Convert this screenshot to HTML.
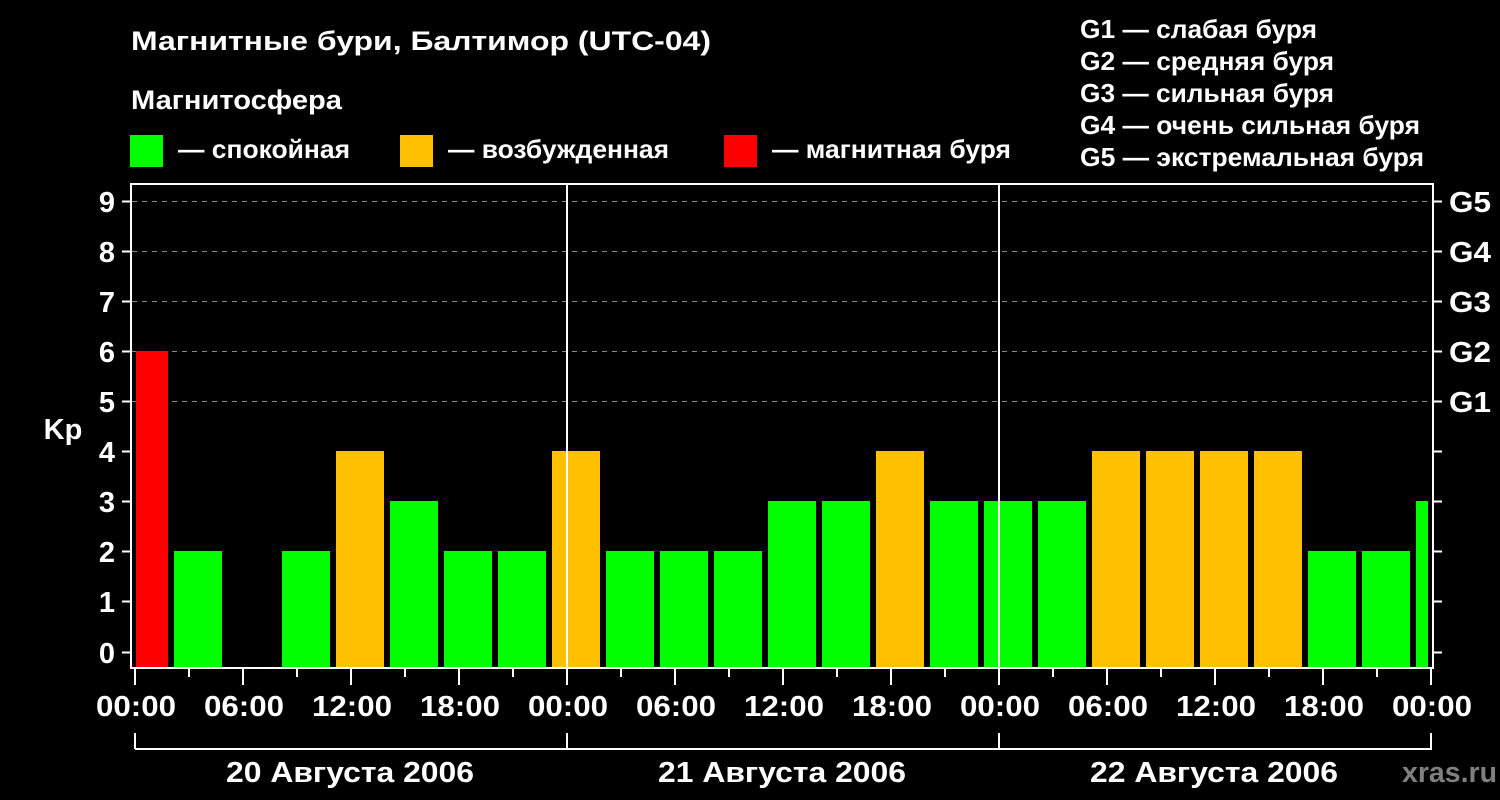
<!DOCTYPE html>
<html><head><meta charset="utf-8"><style>html,body{margin:0;padding:0;background:#000}svg{display:block}text{font-family:"Liberation Sans",Arial,sans-serif;font-weight:bold;fill:#fff}</style></head><body>
<svg width="1500" height="800" viewBox="0 0 1500 800" xmlns="http://www.w3.org/2000/svg">
<rect width="1500" height="800" fill="#000"/>
<text x="131" y="50" font-size="27" textLength="580" lengthAdjust="spacingAndGlyphs">Магнитные бури, Балтимор (UTC-04)</text>
<text x="131" y="109" font-size="27" textLength="211" lengthAdjust="spacingAndGlyphs">Магнитосфера</text>
<rect x="130" y="135" width="33" height="32" fill="#00ff00"/>
<text x="178" y="158" font-size="26" textLength="172" lengthAdjust="spacingAndGlyphs">— спокойная</text>
<rect x="400" y="135" width="33" height="32" fill="#ffc000"/>
<text x="448" y="158" font-size="26" textLength="221" lengthAdjust="spacingAndGlyphs">— возбужденная</text>
<rect x="724" y="135" width="33" height="32" fill="#ff0000"/>
<text x="772" y="158" font-size="26" textLength="239" lengthAdjust="spacingAndGlyphs">— магнитная буря</text>
<g font-size="26">
<text x="1080" y="38" textLength="237" lengthAdjust="spacingAndGlyphs">G1 — слабая буря</text>
<text x="1080" y="70" textLength="254" lengthAdjust="spacingAndGlyphs">G2 — средняя буря</text>
<text x="1080" y="102" textLength="254" lengthAdjust="spacingAndGlyphs">G3 — сильная буря</text>
<text x="1080" y="134" textLength="340" lengthAdjust="spacingAndGlyphs">G4 — очень сильная буря</text>
<text x="1080" y="166" textLength="344" lengthAdjust="spacingAndGlyphs">G5 — экстремальная буря</text>
</g>
<g stroke="#888" stroke-width="1" stroke-dasharray="5,5">
<line x1="132" y1="201.5" x2="1432" y2="201.5"/>
<line x1="132" y1="251.5" x2="1432" y2="251.5"/>
<line x1="132" y1="301.5" x2="1432" y2="301.5"/>
<line x1="132" y1="351.5" x2="1432" y2="351.5"/>
<line x1="132" y1="401.5" x2="1432" y2="401.5"/>
</g>
<g>
<rect x="136" y="351" width="32" height="317" fill="#ff0000"/>
<rect x="174" y="551" width="48" height="117" fill="#00ff00"/>
<rect x="282" y="551" width="48" height="117" fill="#00ff00"/>
<rect x="336" y="451" width="48" height="217" fill="#ffc000"/>
<rect x="390" y="501" width="48" height="167" fill="#00ff00"/>
<rect x="444" y="551" width="48" height="117" fill="#00ff00"/>
<rect x="498" y="551" width="48" height="117" fill="#00ff00"/>
<rect x="552" y="451" width="48" height="217" fill="#ffc000"/>
<rect x="606" y="551" width="48" height="117" fill="#00ff00"/>
<rect x="660" y="551" width="48" height="117" fill="#00ff00"/>
<rect x="714" y="551" width="48" height="117" fill="#00ff00"/>
<rect x="768" y="501" width="48" height="167" fill="#00ff00"/>
<rect x="822" y="501" width="48" height="167" fill="#00ff00"/>
<rect x="876" y="451" width="48" height="217" fill="#ffc000"/>
<rect x="930" y="501" width="48" height="167" fill="#00ff00"/>
<rect x="984" y="501" width="48" height="167" fill="#00ff00"/>
<rect x="1038" y="501" width="48" height="167" fill="#00ff00"/>
<rect x="1092" y="451" width="48" height="217" fill="#ffc000"/>
<rect x="1146" y="451" width="48" height="217" fill="#ffc000"/>
<rect x="1200" y="451" width="48" height="217" fill="#ffc000"/>
<rect x="1254" y="451" width="48" height="217" fill="#ffc000"/>
<rect x="1308" y="551" width="48" height="117" fill="#00ff00"/>
<rect x="1362" y="551" width="48" height="117" fill="#00ff00"/>
<rect x="1416" y="501" width="12" height="167" fill="#00ff00"/>
</g>
<g stroke="#fff" stroke-width="2">
<line x1="567" y1="183" x2="567" y2="668"/>
<line x1="999" y1="183" x2="999" y2="668"/>
</g>
<rect x="131" y="184" width="1302" height="484" fill="none" stroke="#fff" stroke-width="2"/>
<g stroke="#fff" stroke-width="2">
<line x1="122" y1="201.5" x2="131" y2="201.5"/><line x1="1433" y1="201.5" x2="1442" y2="201.5"/>
<line x1="122" y1="251.5" x2="131" y2="251.5"/><line x1="1433" y1="251.5" x2="1442" y2="251.5"/>
<line x1="122" y1="301.5" x2="131" y2="301.5"/><line x1="1433" y1="301.5" x2="1442" y2="301.5"/>
<line x1="122" y1="351.5" x2="131" y2="351.5"/><line x1="1433" y1="351.5" x2="1442" y2="351.5"/>
<line x1="122" y1="401.5" x2="131" y2="401.5"/><line x1="1433" y1="401.5" x2="1442" y2="401.5"/>
<line x1="122" y1="451.5" x2="131" y2="451.5"/><line x1="1433" y1="451.5" x2="1442" y2="451.5"/>
<line x1="122" y1="501.5" x2="131" y2="501.5"/><line x1="1433" y1="501.5" x2="1442" y2="501.5"/>
<line x1="122" y1="551.5" x2="131" y2="551.5"/><line x1="1433" y1="551.5" x2="1442" y2="551.5"/>
<line x1="122" y1="601.5" x2="131" y2="601.5"/><line x1="1433" y1="601.5" x2="1442" y2="601.5"/>
<line x1="122" y1="652.5" x2="131" y2="652.5"/><line x1="1433" y1="652.5" x2="1442" y2="652.5"/>
</g>
<g font-size="29" text-anchor="middle">
<text x="107" y="212">9</text><text x="107" y="262">8</text><text x="107" y="312">7</text>
<text x="107" y="362">6</text><text x="107" y="412">5</text><text x="107" y="462">4</text>
<text x="107" y="512">3</text><text x="107" y="562">2</text><text x="107" y="612">1</text>
<text x="107" y="663">0</text>
<text x="63" y="439">Kp</text>
</g>
<g font-size="29">
<text x="1449" y="212" textLength="42" lengthAdjust="spacingAndGlyphs">G5</text><text x="1449" y="262" textLength="42" lengthAdjust="spacingAndGlyphs">G4</text><text x="1449" y="312" textLength="42" lengthAdjust="spacingAndGlyphs">G3</text>
<text x="1449" y="362" textLength="42" lengthAdjust="spacingAndGlyphs">G2</text><text x="1449" y="412" textLength="42" lengthAdjust="spacingAndGlyphs">G1</text>
</g>
<g stroke="#fff" stroke-width="2">
<line x1="135" y1="669" x2="135" y2="685"/><line x1="189" y1="669" x2="189" y2="677"/>
<line x1="243" y1="669" x2="243" y2="685"/><line x1="297" y1="669" x2="297" y2="677"/>
<line x1="351" y1="669" x2="351" y2="685"/><line x1="405" y1="669" x2="405" y2="677"/>
<line x1="459" y1="669" x2="459" y2="685"/><line x1="513" y1="669" x2="513" y2="677"/>
<line x1="567" y1="669" x2="567" y2="685"/><line x1="621" y1="669" x2="621" y2="677"/>
<line x1="675" y1="669" x2="675" y2="685"/><line x1="729" y1="669" x2="729" y2="677"/>
<line x1="783" y1="669" x2="783" y2="685"/><line x1="837" y1="669" x2="837" y2="677"/>
<line x1="891" y1="669" x2="891" y2="685"/><line x1="945" y1="669" x2="945" y2="677"/>
<line x1="999" y1="669" x2="999" y2="685"/><line x1="1053" y1="669" x2="1053" y2="677"/>
<line x1="1107" y1="669" x2="1107" y2="685"/><line x1="1161" y1="669" x2="1161" y2="677"/>
<line x1="1215" y1="669" x2="1215" y2="685"/><line x1="1269" y1="669" x2="1269" y2="677"/>
<line x1="1323" y1="669" x2="1323" y2="685"/><line x1="1377" y1="669" x2="1377" y2="677"/>
<line x1="1431" y1="669" x2="1431" y2="685"/>
</g>
<g font-size="29" text-anchor="middle">
<text x="136" y="716" textLength="80" lengthAdjust="spacingAndGlyphs">00:00</text><text x="244" y="716" textLength="80" lengthAdjust="spacingAndGlyphs">06:00</text><text x="352" y="716" textLength="80" lengthAdjust="spacingAndGlyphs">12:00</text>
<text x="460" y="716" textLength="80" lengthAdjust="spacingAndGlyphs">18:00</text><text x="568" y="716" textLength="80" lengthAdjust="spacingAndGlyphs">00:00</text><text x="676" y="716" textLength="80" lengthAdjust="spacingAndGlyphs">06:00</text>
<text x="784" y="716" textLength="80" lengthAdjust="spacingAndGlyphs">12:00</text><text x="892" y="716" textLength="80" lengthAdjust="spacingAndGlyphs">18:00</text><text x="1000" y="716" textLength="80" lengthAdjust="spacingAndGlyphs">00:00</text>
<text x="1108" y="716" textLength="80" lengthAdjust="spacingAndGlyphs">06:00</text><text x="1216" y="716" textLength="80" lengthAdjust="spacingAndGlyphs">12:00</text><text x="1324" y="716" textLength="80" lengthAdjust="spacingAndGlyphs">18:00</text>
<text x="1432" y="716" textLength="80" lengthAdjust="spacingAndGlyphs">00:00</text>
</g>
<g stroke="#fff" stroke-width="2" fill="none">
<line x1="135" y1="749" x2="1432" y2="749"/>
<line x1="135" y1="733" x2="135" y2="749"/>
<line x1="567" y1="733" x2="567" y2="749"/>
<line x1="999" y1="733" x2="999" y2="749"/>
<line x1="1431" y1="733" x2="1431" y2="749"/>
</g>
<g font-size="29" text-anchor="middle">
<text x="350" y="782" textLength="248" lengthAdjust="spacingAndGlyphs">20 Августа 2006</text>
<text x="782" y="782" textLength="248" lengthAdjust="spacingAndGlyphs">21 Августа 2006</text>
<text x="1214" y="782" textLength="248" lengthAdjust="spacingAndGlyphs">22 Августа 2006</text>
</g>
<text x="1402" y="782" font-size="29" style="fill:#808080" textLength="95" lengthAdjust="spacingAndGlyphs">xras.ru</text>
</svg>
</body></html>
